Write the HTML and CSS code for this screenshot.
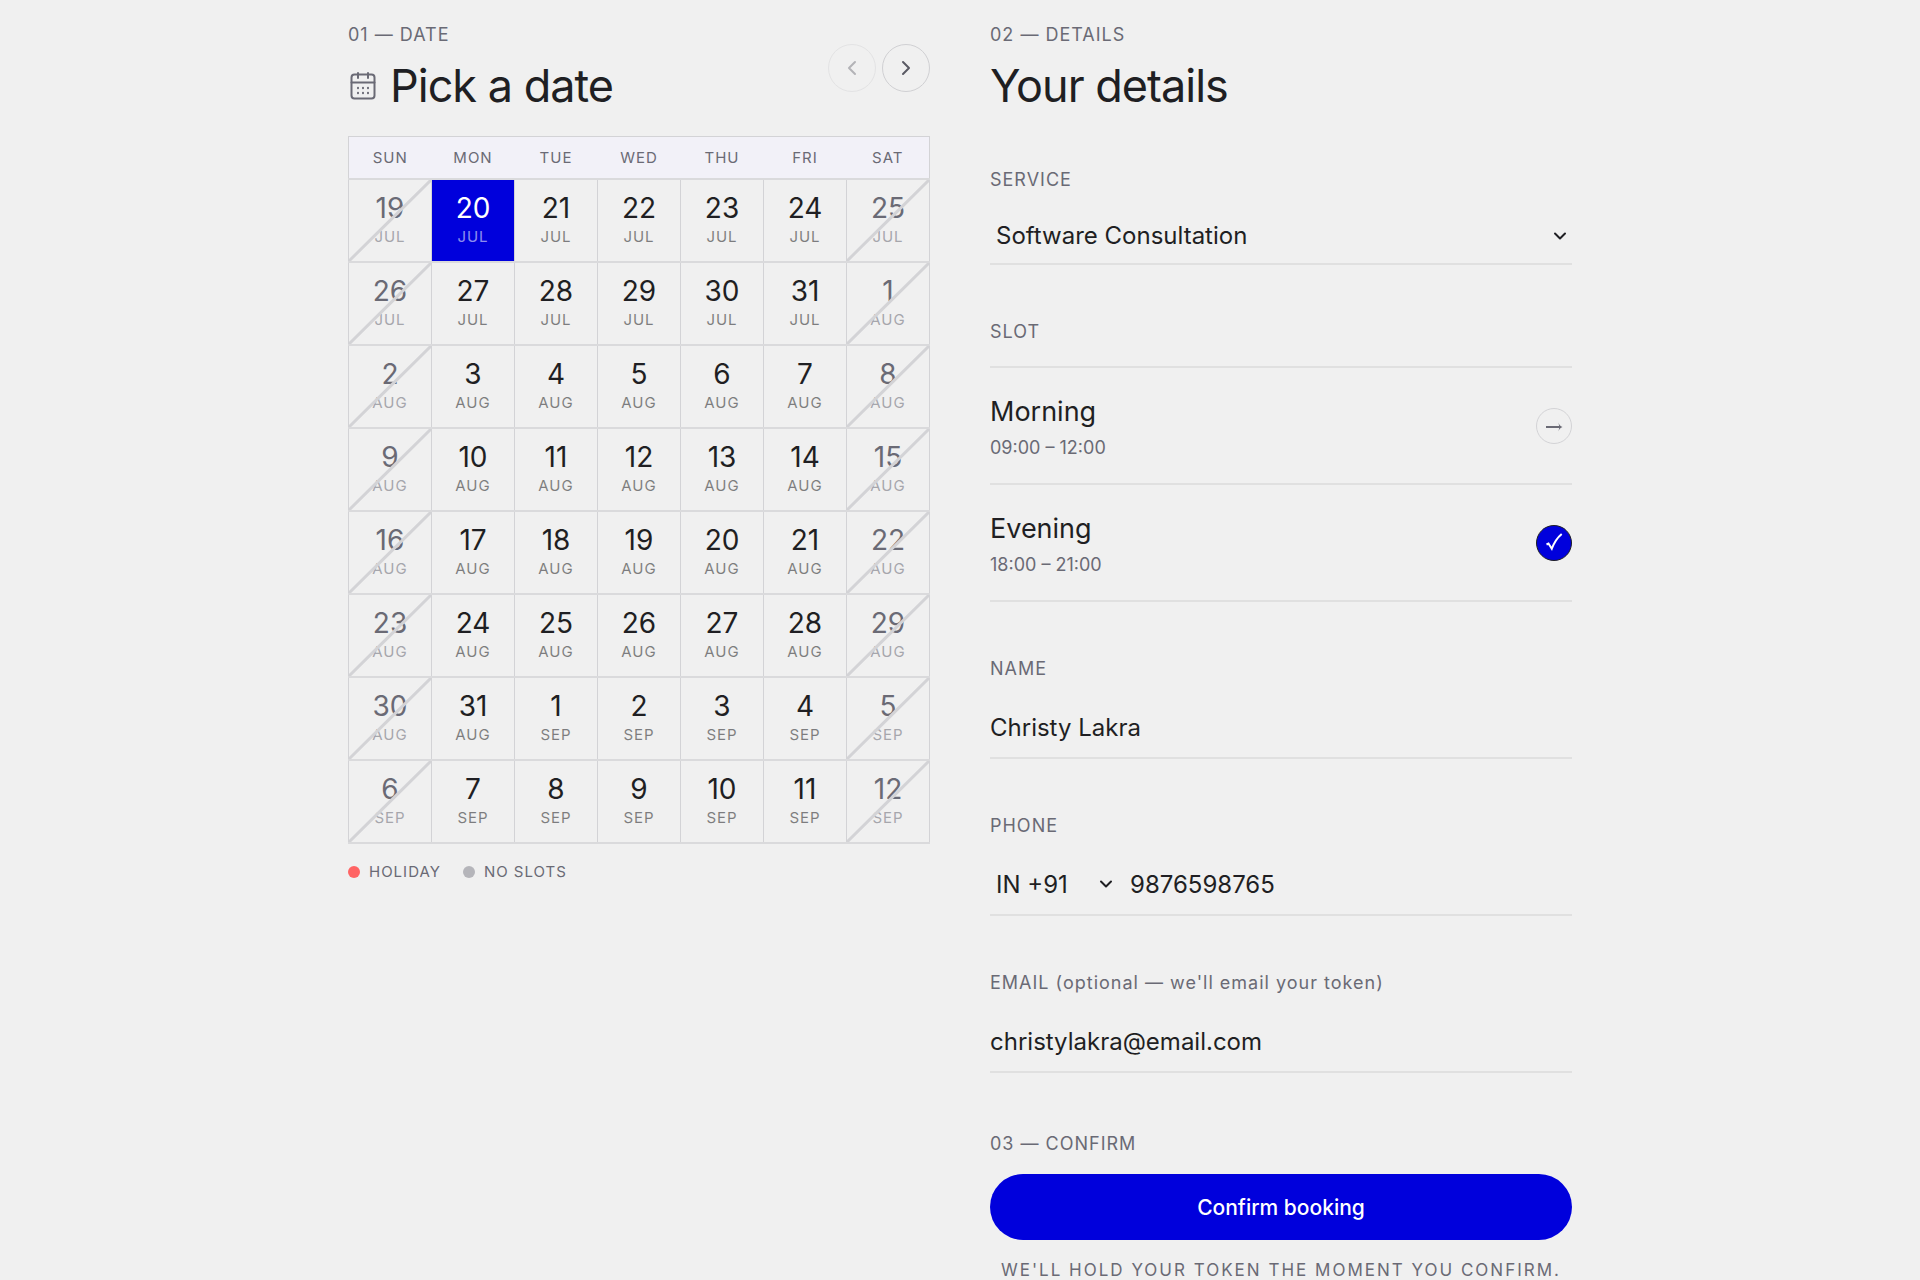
FILE: index.html
```html
<!DOCTYPE html>
<html lang="en">
<head>
  <meta charset="UTF-8" />
  <meta name="viewport" content="width=device-width, initial-scale=1.0"/>
  <title>Book an appointment</title>
  <link rel="stylesheet" href="styles.css">
</head>
<body>
  <main class="booking">
    <!-- Calendar -->
    <section class="date-panel">
      <header class="panel-header">
        <div>
          <p class="eyebrow">01 — DATE</p>
          <h2 class="title">
            <svg class="title-icon" viewBox="0 0 30 30" fill="none" stroke="currentColor" stroke-width="2" stroke-linecap="round" stroke-linejoin="round">
              <rect x="3.5" y="3.5" width="23" height="24" rx="3"/>
              <path d="M3.500 11.500h23M10 2v5M20 2v5"/>
              <path d="M10 16.800v.4M15 16.800v.4M20 16.800v.4M10 21.800v.4M15 21.800v.4M20 21.800v.4"/>
            </svg>
            Pick a date
          </h2>
        </div>
        <div class="nav">
          <button type="button" class="nav-btn" aria-label="Previous" disabled>
            <svg viewBox="0 0 16 16"><path d="M11 2L5 8l6 6"/></svg>
          </button>
          <button type="button" class="nav-btn" aria-label="Next">
            <svg viewBox="0 0 16 16"><path d="M5 2l6 6-6 6"/></svg>
          </button>
        </div>
      </header>

      <table class="calendar">
        <thead>
          <tr><th>SUN</th><th>MON</th><th>TUE</th><th>WED</th><th>THU</th><th>FRI</th><th>SAT</th></tr>
        </thead>
        <tbody id="calendar-days"></tbody>
      </table>

      <div class="legend">
        <span class="legend-item"><i class="dot holiday"></i>HOLIDAY</span>
        <span class="legend-item"><i class="dot no-slots"></i>NO SLOTS</span>
      </div>
    </section>

    <!-- Details form -->
    <form class="details-panel">
      <header>
        <p class="eyebrow">02 — DETAILS</p>
        <h2 class="title">Your details</h2>
      </header>

      <div class="field">
        <label class="label" for="service">SERVICE</label>
        <div class="select-wrap underline">
          <select id="service" name="service">
            <option>Software Consultation</option>
          </select>
          <svg class="chevron" viewBox="0 0 14 14"><path d="M2 4.500l5 5 5-5"/></svg>
        </div>
      </div>

      <div class="field">
        <span class="label">SLOT</span>
        <div class="slots">
          <button type="button" class="slot">
            <span class="slot-text">
              <span class="slot-name">Morning</span>
              <span class="slot-time">09:00 – 12:00</span>
            </span>
            <span class="slot-mark">
              <svg viewBox="1 1 34 34">
                <path d="M10 19h14" fill="none" stroke="currentColor" stroke-width="2"/>
                <path d="M22.500 14.500c.5 2 1.800 3.600 4 4.500-2.200.9-3.500 2.500-4 4.500l.8-4.500z" fill="currentColor"/>
              </svg>
            </span>
          </button>
          <button type="button" class="slot selected">
            <span class="slot-text">
              <span class="slot-name">Evening</span>
              <span class="slot-time">18:00 – 21:00</span>
            </span>
            <span class="slot-mark">
              <svg viewBox="1 1 34 34">
                <path d="M10.500 19.500l2-1 3.300 5.200C18 18 21.500 12.500 25.700 9" fill="none" stroke="currentColor" stroke-width="2"/>
              </svg>
            </span>
          </button>
        </div>
      </div>

      <div class="field">
        <label class="label" for="name">NAME</label>
        <input class="text-input underline" type="text" id="name" name="name" value="Christy Lakra">
      </div>

      <div class="field">
        <label class="label" for="phone">PHONE</label>
        <div class="phone underline">
          <div class="select-wrap code">
            <select name="country" aria-label="Country code">
              <option>IN +91</option>
            </select>
            <svg class="chevron" viewBox="0 0 14 14"><path d="M2 4.500l5 5 5-5"/></svg>
          </div>
          <input class="text-input" type="tel" id="phone" name="phone" value="9876598765">
        </div>
      </div>

      <div class="field">
        <label class="label" for="email">EMAIL (optional — we'll email your token)</label>
        <input class="text-input underline" type="email" id="email" name="email" value="christylakra@email.com">
      </div>

      <!-- Confirm -->
      <div class="confirm">
        <p class="eyebrow">03 — CONFIRM</p>
        <button class="confirm-btn" type="submit">Confirm booking</button>
        <p class="note">WE'LL HOLD YOUR TOKEN THE MOMENT YOU CONFIRM.</p>
      </div>
    </form>
  </main>

  <script src="script.js"></script>
</body>
</html>
```
FILE: styles.css
```css
* {
  box-sizing: border-box;
}

body {
  margin: 0;
  background: #f0f0f0;
  color: #1f1f23;
  font-family: Inter, "Liberation Sans", sans-serif;
}

p,
h2 {
  margin: 0;
}

button,
input,
select {
  font-family: inherit;
  color: inherit;
  background: none;
  border: none;
  border-radius: 0;
  padding: 0;
  outline: none;
}

button {
  cursor: pointer;
}

.booking {
  display: grid;
  grid-template-columns: 1fr 1fr;
  gap: 60px;
  align-items: start;
  max-width: 1224px;
  margin: 0 auto;
  padding-top: 23px;
}

.eyebrow,
.label {
  display: block;
  font-size: 18px;
  line-height: 24px;
  letter-spacing: 1px;
  color: #6a6a75;
}

.title {
  display: flex;
  align-items: center;
  gap: 12px;
  margin-top: 12px;
  font-size: 45px;
  line-height: 54px;
  font-weight: 400;
  letter-spacing: -1px;
}

.title-icon {
  width: 30px;
  height: 30px;
  color: #6a6a75;
}

/* Calendar */
.panel-header {
  display: flex;
  justify-content: space-between;
  align-items: center;
  margin-bottom: 23px;
}

.nav {
  display: flex;
  gap: 6px;
}

.nav-btn {
  display: grid;
  place-items: center;
  width: 48px;
  height: 48px;
  border: 1px solid #d0d0d3;
  border-radius: 50%;
  color: #5a5a64;
}

.nav-btn:disabled {
  opacity: 0.4;
  cursor: default;
}

.nav-btn svg {
  width: 16px;
  height: 16px;
}

.nav-btn path,
.chevron path {
  fill: none;
  stroke: currentColor;
  stroke-width: 2;
  stroke-linecap: round;
  stroke-linejoin: round;
}

.calendar {
  width: 100%;
  table-layout: fixed;
  border-collapse: collapse;
  border: 1px solid #d3d3d6;
}

.calendar th {
  height: 42px;
  padding: 0;
  background: #f2f1f8;
  font-size: 15px;
  font-weight: 400;
  letter-spacing: 1px;
  color: #6a6a75;
}

.calendar td {
  padding: 0;
  border: 1px solid #d3d3d6;
  border-top: 2px solid #dadadc;
  border-bottom: 2px solid #dadadc;
}

.day {
  position: relative;
  display: flex;
  flex-direction: column;
  align-items: center;
  justify-content: center;
  width: 100%;
  height: 81px;
}

.day-number {
  font-size: 28px;
  line-height: 34px;
}

.day-month {
  font-size: 15px;
  line-height: 24px;
  letter-spacing: 1px;
  opacity: 0.55;
}

.day.selected {
  background: #0000dc;
  color: #fff;
}

.day.closed {
  color: #6a6a75;
  cursor: default;
}

/* diagonal strike through closed days */
.day.closed::after {
  content: "";
  position: absolute;
  inset: 0;
  background: linear-gradient(to bottom right, transparent calc(50% - 2px), #d3d3d6 calc(50% - 1px), #d3d3d6 calc(50% + 1px), transparent calc(50% + 2px));
}

.legend {
  display: flex;
  gap: 22px;
  margin-top: 18px;
}

.legend-item {
  display: flex;
  align-items: center;
  gap: 9px;
  font-size: 15px;
  line-height: 20px;
  letter-spacing: 1px;
  color: #6a6a75;
}

.dot {
  width: 12px;
  height: 12px;
  border-radius: 50%;
}

.dot.holiday {
  background: #ff6464;
}

.dot.no-slots {
  background: #b5b5ba;
}

/* Details */
.field {
  margin-top: 55px;
}

.underline {
  border-bottom: 2px solid #e0e0e0;
}

.select-wrap {
  position: relative;
  height: 57px;
  margin-top: 16px;
}

.select-wrap select {
  appearance: none;
  width: 100%;
  height: 100%;
  padding: 0 24px 0 6px;
  font-size: 24px;
}

.chevron {
  position: absolute;
  right: 5px;
  top: 50%;
  width: 14px;
  height: 14px;
  margin-top: -7px;
  pointer-events: none;
}

.text-input {
  display: block;
  width: 100%;
  height: 62px;
  margin-top: 16px;
  font-size: 24px;
}

.phone {
  display: flex;
  gap: 6px;
  height: 62px;
  margin-top: 16px;
}

.phone .select-wrap,
.phone .text-input {
  height: 60px;
  margin-top: 0;
}

.phone .code {
  flex: 0 0 134px;
}

.code .chevron {
  right: 11px;
}

.slots {
  margin-top: 22px;
  border-top: 2px solid #e0e0e0;
}

.slot {
  display: flex;
  justify-content: space-between;
  align-items: center;
  width: 100%;
  height: 117px;
  border-bottom: 2px solid #e0e0e0;
  text-align: left;
}

.slot-text {
  display: flex;
  flex-direction: column;
  gap: 6px;
}

.slot-name {
  font-size: 27px;
  line-height: 38px;
}

.slot-time {
  font-size: 18px;
  line-height: 22px;
  color: #6a6a75;
}

.slot-mark {
  display: grid;
  place-items: center;
  width: 36px;
  height: 36px;
  border: 1px solid #d3d3d6;
  border-radius: 50%;
  color: #6a6a75;
}

.slot-mark svg {
  width: 34px;
  height: 34px;
}

.slot.selected .slot-mark {
  background: #0000dc;
  border-color: #1f1f23;
  color: #fff;
}

.confirm {
  margin-top: 59px;
}

.confirm-btn {
  width: 100%;
  height: 66px;
  margin-top: 18px;
  border-radius: 33px;
  background: #0000dc;
  color: #fff;
  font-size: 21px;
  font-weight: 500;
}

.note {
  margin-top: 21px;
  font-size: 17px;
  line-height: 18px;
  letter-spacing: 2px;
  text-align: center;
  color: #6a6a75;
}
```
FILE: script.js
```js
const months = ['JAN', 'FEB', 'MAR', 'APR', 'MAY', 'JUN', 'JUL', 'AUG', 'SEP', 'OCT', 'NOV', 'DEC'];
const firstDay = new Date(2026, 6, 19);
const selected = 1;
const body = document.getElementById('calendar-days');

for (let week = 0; week < 8; week++) {
  const row = body.insertRow();

  for (let day = 0; day < 7; day++) {
    const index = week * 7 + day;
    const date = new Date(firstDay);
    date.setDate(firstDay.getDate() + index);

    const button = document.createElement('button');
    button.type = 'button';
    button.className = 'day';
    if (index === selected) button.classList.add('selected');

    // weekends have no slots
    if (day === 0 || day === 6) {
      button.classList.add('closed');
      button.disabled = true;
    }

    button.innerHTML = `<span class="day-number">${date.getDate()}</span><span class="day-month">${months[date.getMonth()]}</span>`;
    row.insertCell().appendChild(button);
  }
}
```
